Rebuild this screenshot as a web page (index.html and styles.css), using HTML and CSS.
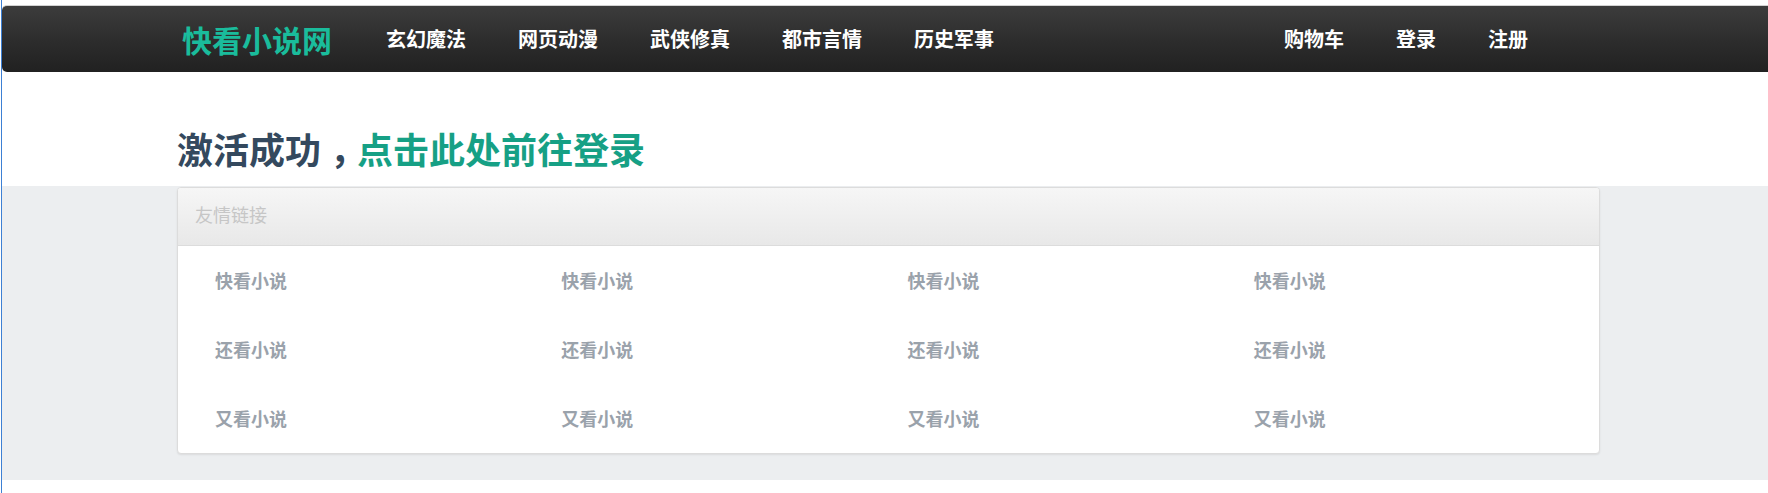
FILE: index.html
```html
<!DOCTYPE html>
<html lang="zh-CN">
<head>
<meta charset="utf-8">
<title>快看小说网 - 激活成功</title>
<link rel="stylesheet" href="styles.css">
</head>
<body>
<nav class="navbar">
  <div class="nav-inner">
    <a class="brand" href="#">快看小说网</a>
    <ul class="nav-list">
      <li><a href="#">玄幻魔法</a></li>
      <li><a href="#">网页动漫</a></li>
      <li><a href="#">武侠修真</a></li>
      <li><a href="#">都市言情</a></li>
      <li><a href="#">历史军事</a></li>
    </ul>
    <ul class="nav-list nav-right">
      <li><a href="#">购物车</a></li>
      <li><a href="#">登录</a></li>
      <li><a href="#">注册</a></li>
    </ul>
  </div>
</nav>

<section class="hero">
  <h1 class="title">激活成功<span class="comma">，</span><a class="title-link" href="#">点击此处前往登录</a></h1>
</section>

<section class="band">
  <div class="panel">
    <div class="panel-heading">友情链接</div>
    <div class="panel-body">
      <a class="cell" href="#">快看小说</a>
      <a class="cell" href="#">快看小说</a>
      <a class="cell" href="#">快看小说</a>
      <a class="cell" href="#">快看小说</a>
      <a class="cell" href="#">还看小说</a>
      <a class="cell" href="#">还看小说</a>
      <a class="cell" href="#">还看小说</a>
      <a class="cell" href="#">还看小说</a>
      <a class="cell" href="#">又看小说</a>
      <a class="cell" href="#">又看小说</a>
      <a class="cell" href="#">又看小说</a>
      <a class="cell" href="#">又看小说</a>
    </div>
  </div>
</section>
</body>
</html>
```
FILE: styles.css
```css
html {
  background: #ffffff;
}
body {
  margin: 0 0 0 1px;
  border-left: 1px solid #3d80d4;
  min-height: 493px;
  box-sizing: border-box;
  overflow: hidden;
  font-family: "Noto Sans CJK SC", "Noto Sans", sans-serif;
  background: #ffffff;
}
a {
  text-decoration: none;
}
ul {
  list-style: none;
  margin: 0;
  padding: 0;
}

.navbar {
  margin-top: 5px;
  height: 66px;
  border-top: 1px solid #d2d2d2;
  border-radius: 5px 0 0 5px;
  background: linear-gradient(to bottom, #3c3c3c 0%, #2c2c2c 55%, #212121 100%);
  display: flex;
  align-items: center;
}
.nav-inner {
  display: flex;
  align-items: center;
  margin-left: 180px;
  width: 1372px;
}
.brand {
  font-size: 30px;
  font-weight: 700;
  color: #1abc9c;
  line-height: 40px;
  margin-right: 28px;
  white-space: nowrap;
}
.nav-list {
  display: flex;
  align-items: center;
}
.nav-list a {
  display: block;
  padding: 0 26px;
  font-size: 20px;
  font-weight: 700;
  line-height: 40px;
  color: #ffffff;
  white-space: nowrap;
}
.nav-right {
  margin-left: auto;
}

.hero {
  height: 114px;
  box-sizing: border-box;
  padding: 58px 0 0 175px;
}
.title {
  margin: 0;
  font-size: 36px;
  line-height: 36px;
  font-weight: 700;
  color: #34495e;
  white-space: nowrap;
}
.comma {
  margin-left: 9px;
  letter-spacing: -9px;
}
.title-link {
  color: #16a085;
}

.band {
  background: #eceef0;
  padding: 1px 0 26px 175px;
}
.panel {
  width: 1421px;
  background: #ffffff;
  border: 1px solid #dcdcdc;
  border-radius: 4px;
  box-shadow: 0 1px 2px rgba(0, 0, 0, 0.08);
  overflow: hidden;
}
.panel-heading {
  height: 58px;
  box-sizing: border-box;
  padding: 14px 17px 20px;
  font-size: 18px;
  line-height: 24px;
  color: #c6c6c6;
  background: linear-gradient(to bottom, #f6f6f6 0%, #e8e8e8 100%);
  border-bottom: 1px solid #dcdcdc;
}
.panel-body {
  display: grid;
  grid-template-columns: repeat(4, 1fr);
  grid-auto-rows: 69px;
  padding: 0 18px;
}
.cell {
  display: block;
  padding-left: 19px;
  font-size: 18px;
  font-weight: 700;
  line-height: 69px;
  color: #9aa2ab;
  white-space: nowrap;
}
```
